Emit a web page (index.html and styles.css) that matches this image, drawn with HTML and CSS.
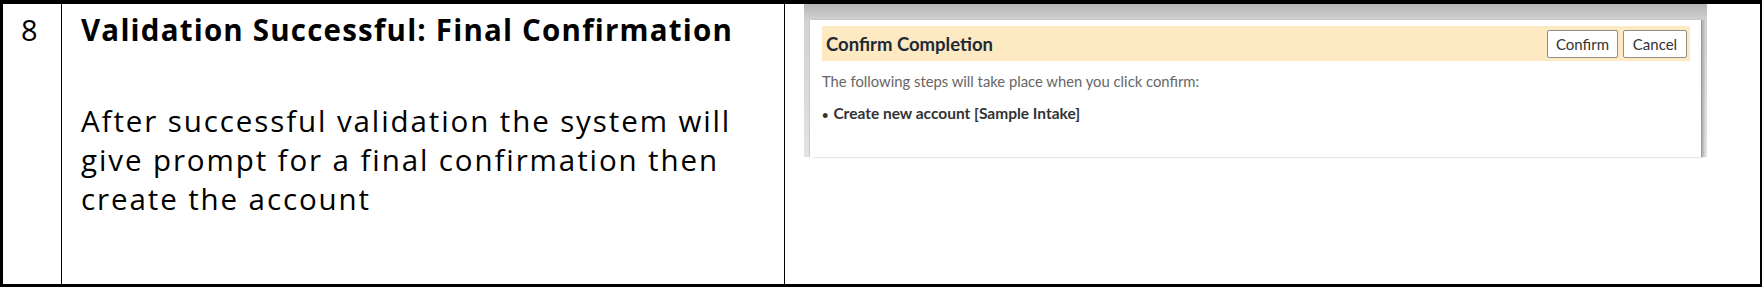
FILE: index.html
```html
<!DOCTYPE html>
<html lang="en">
<head>
    <meta charset="UTF-8">
    <meta name="viewport" content="width=device-width, initial-scale=1.0">
    <title>Step 8 - Final Confirmation</title>
    <link rel="stylesheet" href="styles.css">
</head>
<body>

<div class="step-table">
    <!-- step number -->
    <div class="step-num">8</div>

    <!-- step description -->
    <div class="step-text">
        <h2 class="step-title">Validation Successful: Final Confirmation</h2>
        <p class="step-desc">After successful validation the system will give prompt for a final confirmation then create the account</p>
    </div>

    <!-- screenshot of the dialog -->
    <div class="step-shot">
        <div class="shot">
            <div class="dialog">
                <div class="dialog-head">
                    <span class="dialog-title">Confirm Completion</span>
                    <div class="dialog-actions">
                        <button class="btn btn-confirm">Confirm</button>
                        <button class="btn btn-cancel">Cancel</button>
                    </div>
                </div>
                <p class="dialog-note">The following steps will take place when you click confirm:</p>
                <ul class="dialog-steps">
                    <li>Create new account [Sample Intake]</li>
                </ul>
            </div>
        </div>
    </div>
</div>

</body>
</html>
```

FILE: styles.css
```css
* {
    box-sizing: border-box;
}

body {
    margin: 0;
    padding: 0;
    background-color: white;
}

.step-table {
    width: 1762px;
    height: 287px;
    display: grid;
    grid-template-columns: 59px 723px 1fr;
    border-top: 4px solid black;
    border-left: 3px solid black;
    border-bottom: 3px solid black;
    border-right: 2px solid black;
    font-family: 'Open Sans', sans-serif;
    color: black;
}

.step-num,
.step-text {
    border-right: 1px solid black;
}

.step-num {
    padding: 7px 0 0 18px;
    font-size: 29px;
    line-height: 38px;
}

.step-text {
    padding: 7px 0 0 19px;
}

.step-title {
    margin: 0;
    font-size: 29.5px;
    font-weight: bold;
    letter-spacing: 1.2px;
    line-height: 38px;
}

.step-desc {
    margin: 52px 0 0 0;
    max-width: 690px;
    font-size: 29.5px;
    letter-spacing: 1.9px;
    line-height: 39px;
}

.step-shot {
    padding-left: 19px;
}

.shot {
    width: 903px;
    height: 153px;
    padding: 16px 6px 0 6px;
    background: linear-gradient(#b4b4b4, #d2d2d2 16px, #e2e2e2);
}

.dialog {
    height: 100%;
    background-color: white;
    padding: 6px 11px 0 12px;
    box-shadow: -1px 0 0 #c8c8c8, 1px 0 0 #9a9a9a, 3px 0 2px #b0b0b0;
}

.dialog-head {
    height: 35px;
    display: flex;
    align-items: center;
    justify-content: space-between;
    padding: 0 3px 0 4px;
    background-color: #fde9c2;
}

.dialog-title {
    font-family: 'Lato', sans-serif;
    font-size: 18.5px;
    font-weight: bold;
    color: #1e2935;
}

.dialog-actions {
    display: flex;
    gap: 5px;
}

.btn {
    height: 28px;
    padding: 0;
    border: 1px solid #8e8e8e;
    border-radius: 2px;
    background-color: white;
    font-family: 'Lato', sans-serif;
    font-size: 15px;
    color: #333;
}

.btn-confirm {
    width: 71px;
}

.btn-cancel {
    width: 64px;
}

.dialog-note {
    margin: 10px 0 0 0;
    font-family: 'Lato', sans-serif;
    font-size: 14.8px;
    line-height: 20px;
    color: #666;
}

.dialog-steps {
    margin: 12px 0 0 0;
    padding: 0;
    list-style: none;
    font-family: 'Lato', sans-serif;
    font-size: 15.5px;
    font-weight: bold;
    line-height: 20px;
    color: #333;
}

.dialog-steps li::before {
    content: '\2022';
    margin-right: 5px;
    font-size: 11px;
}
```
